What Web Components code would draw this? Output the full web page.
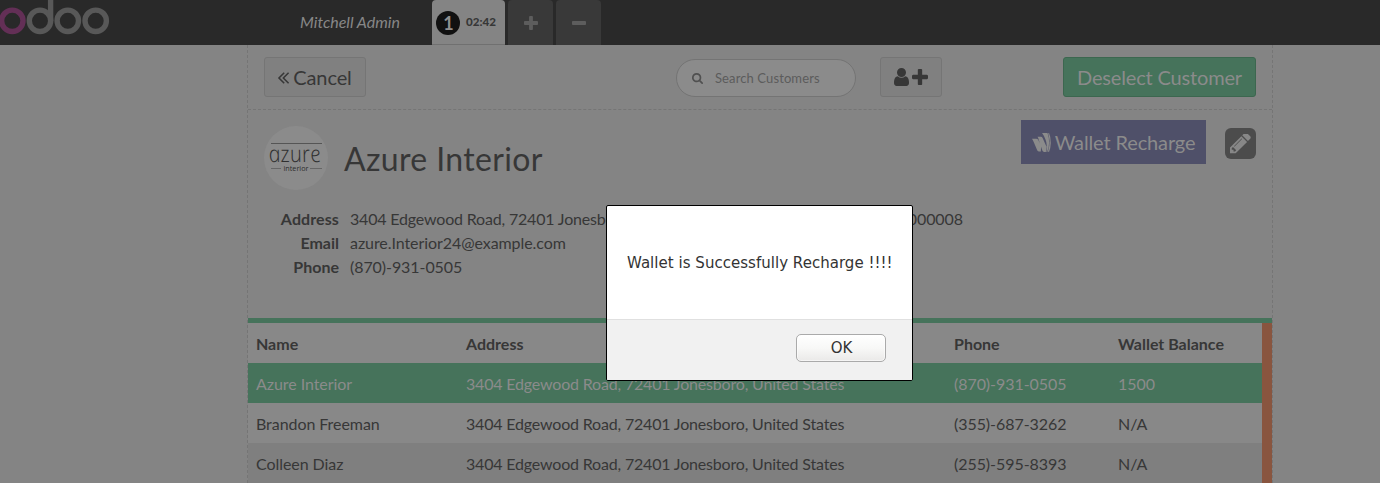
<!DOCTYPE html>
<html lang="en"><head><meta charset="utf-8"><title>Point of Sale</title>
<style>html,body{margin:0;height:483px;overflow:hidden;background:#848484}body{font-family:Lato,"Liberation Sans",sans-serif;color:#373737;font-size:16px}</style></head>
<body><pos-app></pos-app>
<script>
const define=(name,html,render)=>customElements.define(name,class extends HTMLElement{
  constructor(){super();this.attachShadow({mode:'open'}).innerHTML=html;}
  connectedCallback(){if(render)render(this,this.shadowRoot);}
});
const A='M1011 1376q0 13-10 23l-50 50q-10 10-23 10t-23-10l-466-466q-10-10-10-23t10-23l466-466q10-10 23-10t23 10l50 50q10 10 10 23t-10 23l-393 393 393 393q10 10 10 23z';
const icons={
plus:['192 128 1408 1408','M1600 736v192q0 40-28 68t-68 28h-416v416q0 40-28 68t-68 28h-192q-40 0-68-28t-28-68v-416h-416q-40 0-68-28t-28-68v-192q0-40 28-68t68-28h416v-416q0-40 28-68t68-28h192q40 0 68 28t28 68v416h416q40 0 68 28t28 68z'],
minus:['192 128 1408 1408','M1600 736v192q0 40-28 68t-68 28h-1216q-40 0-68-28t-28-68v-192q0-40 28-68t68-28h1216q40 0 68 28t28 68z'],
user:['256 128 1280 1536','M1536 1399q0 109-62.5 187t-150.5 78h-854q-88 0-150.5-78t-62.5-187q0-85 8.5-160.5t31.5-152 58.5-131 94-89 134.5-34.5q131 128 313 128t313-128q76 0 134.5 34.5t94 89 58.5 131 31.5 152 8.5 160.5zm-256-887q0 159-112.5 271.5t-271.5 112.5-271.5-112.5-112.5-271.5 112.5-271.5 271.5-112.5 271.5 112.5 112.5 271.5z'],
search:['64 128 1664 1664','M1216 832q0-185-131.5-316.5t-316.5-131.5-316.5 131.5-131.5 316.5 131.5 316.5 316.5 131.5 316.5-131.5 131.5-316.5zm512 832q0 52-38 90t-90 38q-54 0-90-38l-343-342q-179 124-399 124-143 0-273.5-55.5t-225-150-150-225-55.5-273.5 55.5-273.5 150-225 225-150 273.5-55.5 273.5 55.5 225 150 150 225 55.5 273.5q0 220-124 399l343 343q37 37 37 90z'],
back:['429 461 966 998',A+A.replace('M1011','M1395')],
pencil:['128 256 1536 1536','M491 1536l91-91-235-235-91 91v107h128v128h107zm523-928q0-22-22-22-10 0-17 7l-542 542q-7 7-7 17 0 22 22 22 10 0 17-7l542-542q7-7 7-17zm-54-192l416 416-832 832h-416v-416zm683 96q0 53-37 90l-166 166-416-416 166-165q36-38 90-38 53 0 91 38l235 234q37 39 37 91z'],
wallet:['0 0 20 20','M0 6H4.500Q6 6 6.700 7.500L9.600 13.500 9.300 19.500H7.400Q6.200 19.500 5.600 18.300L2 10Q1.400 8 0 6zM5.800 4H9.300Q10.700 4 11.300 5.500L15.300 14.500 14.600 20H12.700Q11.500 20 11 18.800L7.200 7.500Q6.800 5.500 5.800 4zM10.600 0H16.300Q18 4.500 18 10T16 20H15.200Q16.300 12 14.300 7 12.600 2.600 10.600 0zM16.900 .3H18Q19.800 4 19.800 10.500 19.600 16 18 19.700H16.700Q18.700 14 18.500 8.500 18.200 4 16.900 .3z']};
define('pos-icon','<style>:host{display:block;flex:none}svg{display:block;width:100%;height:100%;fill:currentColor}</style><svg><path/></svg>',(e,r)=>{
 const [v,d]=icons[e.getAttribute('name')];r.querySelector('svg').setAttribute('viewBox',v);r.querySelector('path').setAttribute('d',d);});

define('odoo-logo',`<style>:host{display:block;width:110px;height:45px}svg{display:block}</style>
<svg width="110" height="45" fill="none" stroke="#585858" stroke-width="5.4"><circle cx="12.3" cy="20.8" r="10.7" stroke="#632f56"/><circle cx="40" cy="20.8" r="10.7"/><path d="M50.600 0V21"/><circle cx="67.800" cy="20.8" r="10.7"/><circle cx="95.7" cy="20.8" r="10.7"/></svg>`);

define('pos-topbar',`<style>:host{display:flex;height:45px;background:#292929}
.user{box-sizing:border-box;width:322px;padding:0 32px 0 0;text-align:right;font-style:italic;line-height:43px;color:#878787}
.tabs{display:flex;gap:3px}.tab{display:flex;align-items:center;justify-content:center;width:45px;background:#393939;border-radius:4px 4px 0 0;color:#5d5d5d}
.tab.on{box-sizing:border-box;width:73px;background:#848484;border-bottom:1px solid #707070;justify-content:flex-start;padding:1px 0 0 4px;gap:6px;color:#373737;font-size:11.6px;font-weight:900}
.t{padding-bottom:2px}
.n{width:24px;height:24px;border-radius:50%;background:#111;color:#8f8f8f;font-size:18px;line-height:24px;text-align:center;font-weight:700;text-indent:1px}
pos-icon{width:14px;height:14px}</style>
<odoo-logo></odoo-logo><div class="user">Mitchell Admin</div>
<div class="tabs"><div class="tab on"><span class="n">1</span><span class="t">02:42</span></div><div class="tab"><pos-icon name="plus"></pos-icon></div><div class="tab"><pos-icon name="minus"></pos-icon></div></div>`);

define('pos-button',`<style>:host{display:flex;box-sizing:border-box;height:40px;align-items:center;justify-content:center;border:1px solid #757575;border-radius:3px;background:#808080;font-size:20px;white-space:nowrap}
:host([kind=primary]){background:#46735b;border-color:#3c674f;color:#8b8b8b;letter-spacing:-.16px}
:host([kind=wallet]){height:44px;background:#4f5069;border:0;border-radius:0;color:#8b8b8b;letter-spacing:-.13px}</style><slot></slot>`);

define('search-box',`<style>:host{display:flex;box-sizing:border-box;width:180px;height:38px;border:1px solid #747474;border-radius:19px;background:#8b8b8b;align-items:center;padding-left:15px;gap:12px;font-size:13px;letter-spacing:.11px;color:#5c5c5c}pos-icon{width:11px;height:11px;color:#505050}</style><pos-icon name="search"></pos-icon><span>Search Customers</span>`);

define('pos-actions',`<style>:host{display:flex;box-sizing:border-box;height:65px;padding:12px 16px 0;border-bottom:1px dashed #757575}
.cancel{width:102px;gap:4px;letter-spacing:-.1px}.cancel pos-icon{width:11px;height:12px;margin-top:1px}search-box{margin:2px 0 0 310px}.add{width:62px;margin-left:24px;gap:3px}.u{width:15px;height:18px}.p{width:16px;height:16px}.de{width:193px;margin-left:auto}</style>
<pos-button class="cancel"><pos-icon name="back"></pos-icon><span>Cancel</span></pos-button><search-box></search-box>
<pos-button class="add"><pos-icon class="u" name="user"></pos-icon><pos-icon class="p" name="plus"></pos-icon></pos-button><pos-button class="de" kind="primary">Deselect Customer</pos-button>`);

define('azure-logo',`<style>:host{display:block;width:64px;height:64px;border-radius:50%;background:#8b8b8b}svg{display:block}</style>
<svg width="64" height="64"><path d="M7 17.500H58" stroke="#555"/><path d="M7 42.500H17M46 42.500H58" stroke="#666"/><text transform="translate(6 36) skewX(12)" textLength="52" lengthAdjust="spacingAndGlyphs" font-family="Open Sans" font-style="italic" font-weight="300" font-size="23" fill="#303030">azure</text><text x="19.500" y="44.800" textLength="25" lengthAdjust="spacingAndGlyphs" font-family="Open Sans" font-size="8" fill="#2c2c2c">interior</text></svg>`);

define('customer-details',`<style>:host{display:block;box-sizing:border-box;height:208px;padding:10px 16px 0}
.head{display:flex;height:87px}azure-logo{margin-top:6px}.name{font-size:32px;line-height:40px;margin:19px 0 0 16px;letter-spacing:.35px}
.w{width:185px;margin-left:auto;gap:4px}.w pos-icon{width:19px;height:19px}.edit{display:flex;align-items:center;justify-content:center;width:31px;height:31px;border-radius:6px;background:#4c4c4c;color:#878787;margin:8px 0 0 19px}.edit pos-icon{width:21px;height:21px;margin-top:1px}
dl{display:grid;grid-template-columns:75px 560px;column-gap:11px;grid-auto-rows:24px;line-height:24px;margin:0;letter-spacing:-.07px}dt{font-weight:700;text-align:right;letter-spacing:0}dt:first-child{letter-spacing:.1px}dd{margin:0}.r1{display:flex;justify-content:space-between;width:613px}.ad{letter-spacing:-.18px}</style>
<div class="head"><azure-logo></azure-logo><div class="name">Azure Interior</div><pos-button class="w" kind="wallet"><pos-icon name="wallet"></pos-icon><span>Wallet Recharge</span></pos-button><div class="edit"><pos-icon name="pencil"></pos-icon></div></div>
<dl><dt>Address</dt><dd class="r1"><span class="ad">3404 Edgewood Road, 72401 Jonesboro, United States</span><span>000008</span></dd><dt>Email</dt><dd>azure.Interior24@example.com</dd><dt>Phone</dt><dd>(870)-931-0505</dd></dl>`);

define('customer-row',`<style>:host{display:grid;grid-template-columns:210px 488px 164px 1fr;height:40px;line-height:42px;padding-left:8px;background:#888;letter-spacing:-.06px}
:host([head]){font-weight:700;letter-spacing:0}:host([selected]){background:#46735b;color:#8b8b8b}:host([alt]){background:#7f7f7f}:host(:not([head])) ::slotted(:nth-child(2)){letter-spacing:-.18px}</style><slot></slot>`);

define('customer-list',`<style>:host{display:flex;box-sizing:border-box;height:165px;border-top:5px solid #46735b}.rows{flex:1}.bar{width:10px;background:#89553f}</style><div class="rows"></div><div class="bar"></div>`,(e,r)=>{
 const ad='3404 Edgewood Road, 72401 Jonesboro, United States';
 r.querySelector('.rows').innerHTML=[['head','Name','Address','Phone','Wallet Balance'],['selected','Azure Interior',ad,'(870)-931-0505','1500'],['','Brandon Freeman',ad,'(355)-687-3262','N/A'],['alt','Colleen Diaz',ad,'(255)-595-8393','N/A']].map(([k,...c])=>`<customer-row ${k}>${c.map(t=>`<span>${t}</span>`).join('')}</customer-row>`).join('');});

define('alert-dialog',`<style>:host{display:flex;flex-direction:column;box-sizing:border-box;width:307px;height:176px;border:1px solid #000;border-radius:2px;background:#fff;overflow:hidden;font:15px "DejaVu Sans",sans-serif;color:#333}
.msg{height:113px;line-height:115px;padding-left:20px;white-space:nowrap;letter-spacing:.03px}.foot{flex:1;display:flex;justify-content:flex-end;padding:14px 26px 0 0;border-top:1px solid #e0e0e0;background:#f1f1f1}
.ok{box-sizing:border-box;width:90px;height:28px;border:1px solid #aaa;border-radius:5px;background:linear-gradient(#fff,#f8f8f7 50%,#eae9e8);line-height:26px;text-align:center;text-indent:1px;box-shadow:inset 0 0 0 1px #fff8}</style><div class="msg"><slot></slot></div><div class="foot"><div class="ok">OK</div></div>`);

define('pos-app',`<style>:host{display:block;position:relative;width:1380px;height:483px;overflow:hidden;background:#848484}
main{width:1024px;height:438px;margin:0 auto 0 247px;border:dashed #757575;border-width:0 1px}alert-dialog{position:absolute;left:606px;top:205px}</style>
<pos-topbar></pos-topbar><main><pos-actions></pos-actions><customer-details></customer-details><customer-list></customer-list></main><alert-dialog>Wallet is Successfully Recharge !!!!</alert-dialog>`);
</script></body></html>
